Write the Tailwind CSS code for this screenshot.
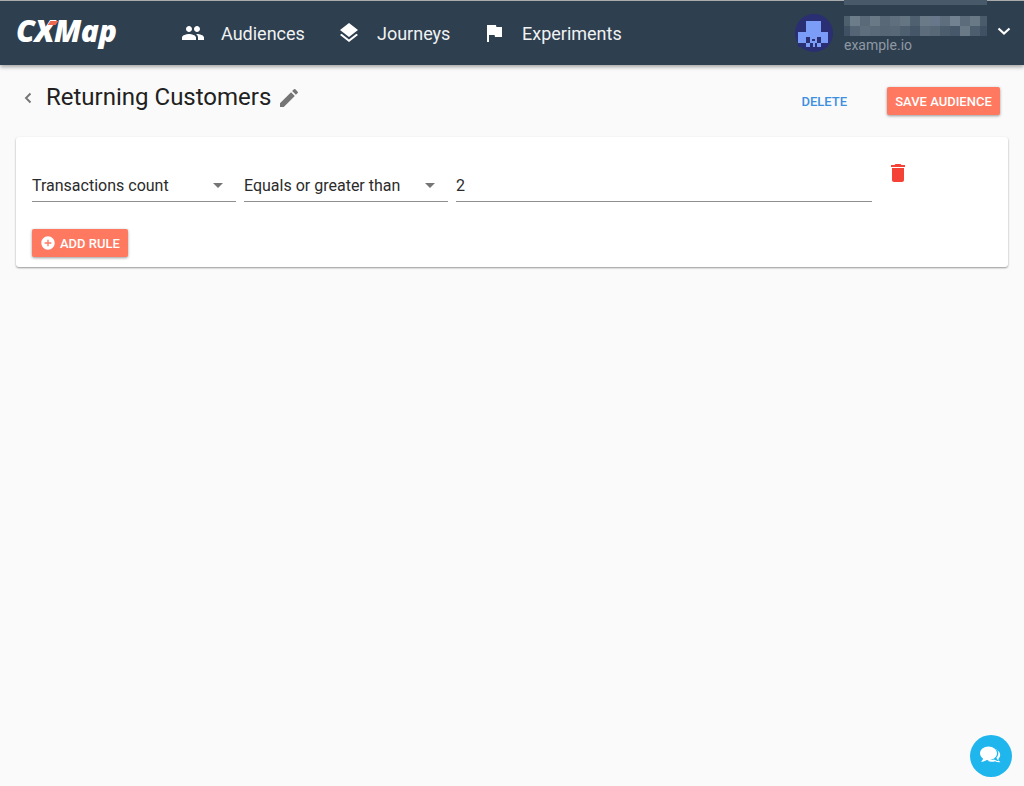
<!DOCTYPE html>
<html lang="en">
<head>
<meta charset="utf-8">
<title>Returning Customers</title>
<script src="https://cdn.jsdelivr.net/npm/@tailwindcss/browser@4"></script>
</head>
<body class="bg-[#fafafa] font-['Roboto',sans-serif] h-[786px] w-[1024px] overflow-hidden relative">
<header class="h-[65px] bg-[#2e3f50] border-t border-t-[#a9abac] shadow-[0_2px_4px_rgba(0,0,0,0.35)] flex items-center text-white relative">
  <div class="w-[181px] pl-[16px] flex items-center relative h-full">
    <span class="font-['Open_Sans',sans-serif] font-extrabold italic text-[30px] tracking-[-0.4px] leading-none mt-[-4px]">CXMap</span>
    <span class="absolute left-[49px] top-[20px] w-[8px] h-[4px] bg-[#f0694f] -skew-x-[35deg]"></span>
  </div>
  <nav class="flex items-center text-[18px] text-[#f0f2f3] leading-none">
    <svg class="w-6 h-6" viewBox="0 0 24 24" fill="#fff"><path d="M16 11c1.660 0 2.990-1.340 2.990-3S17.660 5 16 5c-1.660 0-3 1.340-3 3s1.340 3 3 3zm-8 0c1.660 0 2.990-1.340 2.990-3S9.660 5 8 5C6.340 5 5 6.340 5 8s1.340 3 3 3zm0 2c-2.330 0-7 1.170-7 3.500V19h14v-2.500c0-2.330-4.670-3.500-7-3.500zm8 0c-.290 0-.620.020-.970.050 1.160.840 1.970 1.970 1.970 3.450V19h6v-2.500c0-2.330-4.670-3.500-7-3.500z"/></svg>
    <span class="ml-[16px] w-[84px] pt-[2px]">Audiences</span>
    <svg class="w-6 h-6 ml-[32px]" viewBox="0 0 24 24" fill="#fff"><path d="M11.990 18.540l-7.370-5.730L3 14.070l9 7 9-7-1.630-1.270-7.380 5.740zM12 16l7.360-5.730L21 9l-9-7-9 7 1.630 1.270L12 16z"/></svg>
    <span class="ml-[16px] w-[73px] pt-[2px]">Journeys</span>
    <svg class="w-6 h-6 ml-[32px]" viewBox="0 0 24 24" fill="#fff"><path d="M14.400 6L14 4H5v17h2v-7h5.600l.4 2h7V6z"/></svg>
    <span class="ml-[16px] pt-[2px]">Experiments</span>
  </nav>
  <svg class="absolute left-[795px] top-[13px] w-[38px] h-[38px]" viewBox="0 0 38 38" shape-rendering="crispEdges">
    <circle cx="19" cy="19" r="19" fill="#2a2e73" shape-rendering="auto"/>
    <path fill="#7c9df7" d="M11 7h15v11h7v15H3V18h8z"/>
    <path fill="#2a2e73" d="M3 29h8v4H3zM26 29h7v4h-7zM11 23h4v6h-4zM22 23h4v6h-4zM15 29h3v4h-3zM20 29h2v4h-2zM17 25h3v2h-3z"/>
  </svg>
  <svg class="absolute left-[844px] top-[-1px] w-[143px] h-[40px]" viewBox="0 0 143 40" shape-rendering="crispEdges">
    <rect x="0" y="0" width="143" height="5" fill="#48596a"/>
    <g>
      <rect x="0" y="16" width="143" height="20" fill="#4e5f6e"/>
      <rect x="6" y="16" width="10" height="10" fill="#6d7c89"/>
      <rect x="16" y="16" width="10" height="10" fill="#5a6a78"/>
      <rect x="26" y="16" width="10" height="10" fill="#6a7986"/>
      <rect x="36" y="16" width="10" height="10" fill="#586877"/>
      <rect x="46" y="16" width="10" height="10" fill="#606f7d"/>
      <rect x="56" y="16" width="10" height="10" fill="#667582"/>
      <rect x="66" y="16" width="10" height="10" fill="#4f6070"/>
      <rect x="76" y="16" width="10" height="10" fill="#6b7a87"/>
      <rect x="86" y="16" width="10" height="10" fill="#68778a"/>
      <rect x="96" y="16" width="10" height="10" fill="#5f6e7c"/>
      <rect x="106" y="16" width="10" height="10" fill="#738290"/>
      <rect x="116" y="16" width="10" height="10" fill="#5c6c7a"/>
      <rect x="126" y="16" width="10" height="10" fill="#6a7986"/>
      <rect x="136" y="16" width="7" height="10" fill="#4a5b6b"/>
      <rect x="0" y="26" width="6" height="10" fill="#3f5162"/>
      <rect x="6" y="26" width="10" height="10" fill="#556575"/>
      <rect x="16" y="26" width="10" height="10" fill="#5f6e7c"/>
      <rect x="26" y="26" width="10" height="10" fill="#5a6a78"/>
      <rect x="36" y="26" width="10" height="10" fill="#566675"/>
      <rect x="46" y="26" width="10" height="10" fill="#586877"/>
      <rect x="56" y="26" width="10" height="10" fill="#4f6070"/>
      <rect x="66" y="26" width="10" height="10" fill="#445667"/>
      <rect x="76" y="26" width="10" height="10" fill="#5c6c7a"/>
      <rect x="86" y="26" width="10" height="10" fill="#586877"/>
      <rect x="96" y="26" width="10" height="10" fill="#4c5d6d"/>
      <rect x="106" y="26" width="10" height="10" fill="#465869"/>
      <rect x="116" y="26" width="10" height="10" fill="#6a7986"/>
      <rect x="126" y="26" width="10" height="10" fill="#4d5e6e"/>
      <rect x="136" y="26" width="7" height="10" fill="#3f5162"/>
    </g>
  </svg>
  <span class="absolute left-[844px] top-[36px] text-[14px] leading-[16px] text-[#8e99a3]">example.io</span>
  <svg class="absolute left-[995px] top-[21px] w-[18px] h-[18px]" viewBox="0 0 18 18" fill="none" stroke="#fff" stroke-width="2.2"><path d="M3.500 6.500L9 11.500l5.500-5"/></svg>
</header>

<main class="px-[16px]">
  <div class="h-[72px] flex items-start">
    <svg class="w-[24px] h-[24px] mt-[21px]" viewBox="0 0 24 24" fill="none" stroke="#757575" stroke-width="1.9"><path d="M14.500 7.500L10 12l4.500 4.500"/></svg>
    <h1 class="ml-[6px] mt-[18px] text-[24px] leading-[28px] font-normal text-[#212121]">Returning Customers</h1>
    <svg class="w-[24px] h-[24px] ml-[6px] mt-[21px]" viewBox="0 0 24 24" fill="#757575"><path d="M3 17.250V21h3.750L17.810 9.940l-3.750-3.750L3 17.250zM20.710 7.040a1 1 0 0 0 0-1.410l-2.340-2.340a1 1 0 0 0-1.410 0l-1.830 1.830 3.750 3.750 1.830-1.830z"/></svg>
    <div class="ml-auto mr-[8px] mt-[22px] flex items-center">
      <button class="text-[13px] leading-none font-medium text-[#3d8fe0] mr-[40px]">DELETE</button>
      <button class="w-[113px] h-[28px] pt-[1px] rounded-[2px] bg-[#ff7961] text-white text-[13px] font-medium shadow-[0_1px_3px_rgba(0,0,0,0.4)]">SAVE AUDIENCE</button>
    </div>
  </div>

  <section class="h-[130px] w-[992px] bg-white rounded-[3px] shadow-[0_1px_2px_rgba(0,0,0,0.4)] relative pt-[33px] px-[16px]">
    <div class="flex gap-[8px] items-start">
      <div class="w-[204px] h-[32px] border-b border-b-[#8f8f8f] flex items-center justify-between text-[16px] leading-[30px] text-[#2b2b2b] pr-[13px]">
        <span>Transactions count</span>
        <span class="w-0 h-0 border-x-[5px] border-x-transparent border-t-[5px] border-t-[#757575]"></span>
      </div>
      <div class="w-[204px] h-[32px] border-b border-b-[#8f8f8f] flex items-center justify-between text-[16px] leading-[30px] text-[#2b2b2b] pr-[13px]">
        <span>Equals or greater than</span>
        <span class="w-0 h-0 border-x-[5px] border-x-transparent border-t-[5px] border-t-[#757575]"></span>
      </div>
      <div class="w-[416px] h-[32px] border-b border-b-[#8f8f8f] text-[16px] leading-[31px] text-[#2b2b2b]">2</div>
      <svg class="w-[24px] h-[24px] ml-[6px] mt-[-9px]" viewBox="0 0 24 24" fill="#f44336"><path d="M6 19c0 1.100.9 2 2 2h8c1.100 0 2-.9 2-2V7H6v12zM19 4h-3.500l-1-1h-5l-1 1H5v2h14V4z"/></svg>
    </div>
    <button class="mt-[27px] h-[28px] w-[96px] rounded-[2px] bg-[#ff7961] text-white text-[13px] font-medium shadow-[0_1px_3px_rgba(0,0,0,0.4)] flex items-center pl-[8px]">
      <svg class="w-[16px] h-[16px] mr-[4px]" viewBox="0 0 24 24" fill="#fff"><path d="M12 2C6.480 2 2 6.480 2 12s4.480 10 10 10 10-4.480 10-10S17.520 2 12 2zm5 11h-4v4h-2v-4H7v-2h4V7h2v4h4v2z"/></svg>
      <span class="pt-[2px]">ADD RULE</span>
    </button>
  </section>
</main>

<div class="absolute left-[970px] top-[735px] w-[42px] h-[42px] rounded-full bg-[#1fb6ee] flex items-center justify-center">
  <svg class="w-[26px] h-[26px]" viewBox="0 0 26 26" fill="#fff"><path d="M10.500 3.500c-4.700 0-8.500 3-8.500 6.800 0 2.100 1.200 4 3 5.200-.2 1.200-.9 2.300-2 3.200 2.200 0 4.200-.7 5.700-1.800.6.100 1.200.2 1.800.2 4.700 0 8.500-3 8.500-6.800s-3.800-6.800-8.500-6.800z"/><path d="M20.500 8.500c1.100 1.100 1.800 2.400 1.800 3.900 0 1.600-.7 3-1.900 4.200.2 1 .9 2.400 2.600 3.400-1.800.1-3.700-.6-5-1.500-1.500.6-3.300.7-5 .4-.6.4-1.100.6-1.700.8 2.500 1.200 5.500 1.300 7.700.5 1.500.9 3.500 1.300 5.500 1-1.300-.9-2-2.200-2.200-3.300 1.200-1.100 1.900-2.600 1.900-4 0-2.200-1.600-4.200-4.700-5.400z" transform="translate(-2 -2)"/></svg>
</div>
</body>
</html>
